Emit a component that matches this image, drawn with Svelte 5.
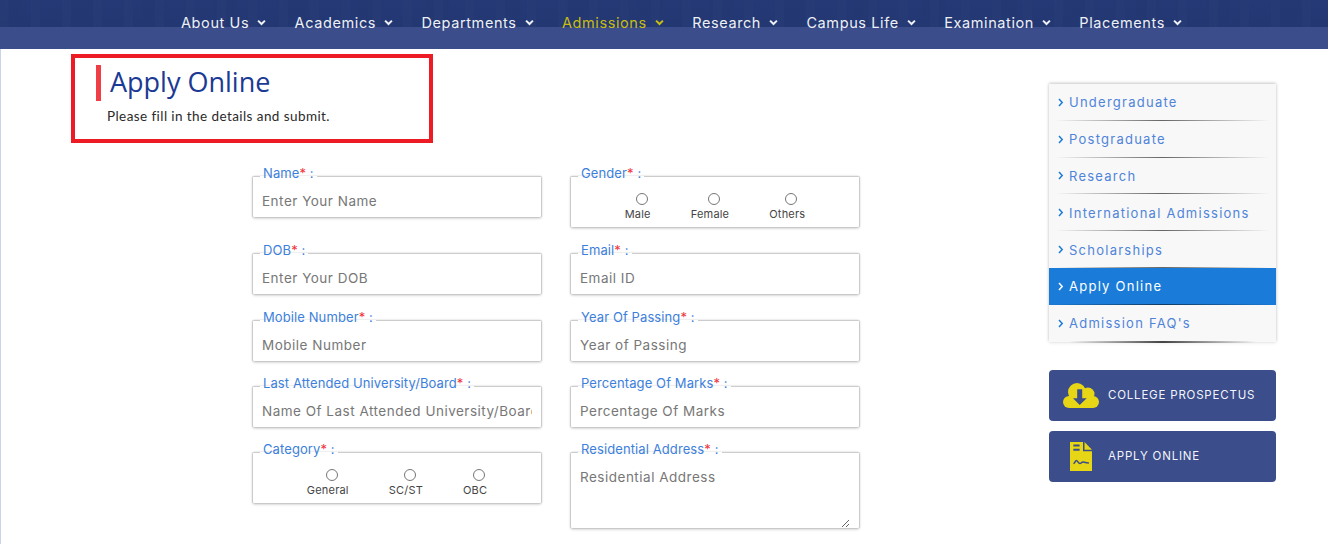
<script lang="ts">
  const navItems = [
    { name: 'About Us' },
    { name: 'Academics' },
    { name: 'Departments' },
    { name: 'Admissions', active: true },
    { name: 'Research' },
    { name: 'Campus Life' },
    { name: 'Examination' },
    { name: 'Placements' },
  ]

  const sideLinks = [
    { name: 'Undergraduate' },
    { name: 'Postgraduate' },
    { name: 'Research' },
    { name: 'International Admissions' },
    { name: 'Scholarships' },
    { name: 'Apply Online', active: true },
    { name: "Admission FAQ's" },
  ]

  const leftFields = [
    { label: 'Name', placeholder: 'Enter Your Name' },
    { label: 'DOB', placeholder: 'Enter Your DOB' },
    { label: 'Mobile Number', placeholder: 'Mobile Number' },
    { label: 'Last Attended University/Board', placeholder: 'Name Of Last Attended University/Board' },
    { label: 'Category', radios: ['General', 'SC/ST', 'OBC'] },
  ]

  const rightFields = [
    { label: 'Gender', radios: ['Male', 'Female', 'Others'] },
    { label: 'Email', placeholder: 'Email ID' },
    { label: 'Year Of Passing', placeholder: 'Year of Passing' },
    { label: 'Percentage Of Marks', placeholder: 'Percentage Of Marks' },
    { label: 'Residential Address', placeholder: 'Residential Address', area: true },
  ]

  // grid order goes row by row
  const fields = leftFields.flatMap((f, i) => [f, rightFields[i]])
</script>

<header class="topbar">
  <nav class="nav">
    {#each navItems as item}
      <a href="#top" class="nav-link" class:active={item.active}>
        {item.name}
        <svg class="caret" viewBox="0 0 10 7" width="9" height="7" aria-hidden="true">
          <path d="M1.200 1.400 5 5.200l3.800-3.800" fill="none" stroke="currentColor" stroke-width="2.200" />
        </svg>
      </a>
    {/each}
  </nav>
</header>

<main class="page">
  <section class="content">
    <div class="heading-box">
      <h1>Apply Online</h1>
      <p>Please fill in the details and submit.</p>
    </div>

    <form class="form-grid">
      {#each fields as field}
        <fieldset class="field">
          <legend>{field.label}<span class="req">*</span> :</legend>
          {#if field.radios}
            <div class="radios">
              {#each field.radios as option}
                <label class="radio">
                  <input type="radio" name={field.label} />
                  <span>{option}</span>
                </label>
              {/each}
            </div>
          {:else if field.area}
            <textarea placeholder={field.placeholder}></textarea>
          {:else}
            <input type="text" placeholder={field.placeholder} />
          {/if}
        </fieldset>
      {/each}
    </form>
  </section>

  <aside class="side">
    <ul class="side-menu">
      {#each sideLinks as link}
        <li class:active={link.active}>
          <svg class="chev" viewBox="0 0 6 9" width="6" height="9" aria-hidden="true">
            <path d="M1 1l3.200 3.500L1 8" fill="none" stroke="currentColor" stroke-width="1.500" />
          </svg>
          <a href="#top">{link.name}</a>
        </li>
      {/each}
    </ul>

    <a href="#top" class="side-btn">
      <span class="btn-icon">
        <svg viewBox="0 0 36 25" width="36" height="25" aria-hidden="true">
          <g fill="#e6d615">
            <circle cx="14" cy="9" r="9" />
            <circle cx="25" cy="11" r="6.500" />
            <circle cx="6" cy="19" r="6" />
            <circle cx="30" cy="19" r="6" />
            <rect x="6" y="13" width="24" height="12" />
          </g>
          <path fill="#3b4d8a" d="M14.200 6.300h5v9h4.500L16.700 22 10 15.300h4.200z" />
        </svg>
      </span>
      College Prospectus
    </a>
    <a href="#top" class="side-btn">
      <span class="btn-icon">
        <svg viewBox="0 0 22 29" width="22" height="29" aria-hidden="true">
          <path fill="#e6d615" d="M0 0h13v9.200h9V29H0z" />
          <path fill="#e6d615" d="M14.500 0 22 7.700h-7.500z" />
          <path fill="none" stroke="#3b4d8a" stroke-width="2" d="M3.400 3.400h6.200M3.400 7.700h6.200" />
          <path fill="none" stroke="#3b4d8a" stroke-width="1.600" d="M3.400 21.500c1.500 0 1.800-3 3-3s2 3 3.500 3 1.500-1.500 3-1.500 2 1 6 1" />
        </svg>
      </span>
      Apply Online
    </a>
  </aside>
</main>

<style>
  :global(body) {
    margin: 0;
    background: #fff;
    font-family: Inter, "Liberation Sans", sans-serif;
    overflow: hidden;
  }
  * {
    box-sizing: border-box;
  }
  a {
    text-decoration: none;
  }

  .topbar {
    height: 49px;
    background:
      repeating-linear-gradient(90deg, rgba(255, 255, 255, 0.012) 0 9px, transparent 9px 31px) 0 0 / 100% 27px no-repeat,
      repeating-linear-gradient(90deg, rgba(0, 0, 0, 0.012) 0 23px, transparent 23px 71px) 0 0 / 100% 27px no-repeat,
      linear-gradient(#243975, #233873) 0 0 / 100% 27px no-repeat,
      #3b4d8a;
  }
  .nav {
    display: flex;
    justify-content: center;
    gap: 28.400px;
    padding: 13px 0 0 35px;
  }
  .nav-link {
    display: flex;
    align-items: center;
    gap: 8px;
    height: 19px;
    font-size: 14.500px;
    letter-spacing: 0.6px;
    color: #eef0f6;
    white-space: nowrap;
  }
  .nav-link.active {
    color: #c9bd12;
  }

  .page {
    display: flex;
    min-height: 495px;
    padding-left: 70px;
    border-left: 1px solid #c8d4e8;
  }
  .content {
    width: 978px;
  }

  .heading-box {
    width: 362px;
    height: 89px;
    margin-top: 5px;
    border: 4px solid #ed1c24;
    padding: 7px 0 0 21px;
  }
  h1 {
    margin: 0;
    height: 36px;
    border-left: 5px solid #ef3e45;
    padding-left: 9px;
    font-family: "Open Sans", sans-serif;
    font-size: 27px;
    font-weight: 400;
    line-height: 34px;
    color: #1b3a94;
  }
  .heading-box p {
    margin: 7px 0 0 11px;
    font-family: Lato, sans-serif;
    font-size: 13.500px;
    line-height: 17px;
    letter-spacing: 0.42px;
    color: #2a2a2a;
  }

  .form-grid {
    display: grid;
    grid-template-columns: 288px 288px;
    grid-template-rows: 77px 67px 66px 66px auto;
    column-gap: 30px;
    align-items: start;
    margin: 22px 0 0 182px;
  }
  .field {
    margin: 0;
    padding: 0 9px;
    min-width: 0;
    border: 0;
    border-top: 1px solid #ccc;
    box-shadow:
      0 1px 3px rgba(0, 0, 0, 0.3),
      -1px 0 1px -0.5px rgba(0, 0, 0, 0.12),
      1px 0 1px -0.5px rgba(0, 0, 0, 0.12);
    border-radius: 1px;
  }
  /* bottom padding lifts the label above the border line */
  legend {
    margin-left: -2px;
    padding: 0 3px 6px;
    font-size: 13px;
    line-height: 16px;
    letter-spacing: 0.1px;
    color: #3d7fdc;
    white-space: nowrap;
  }
  .req {
    color: #f0323c;
  }
  input[type='text'],
  textarea {
    display: block;
    width: 100%;
    border: 0;
    outline: 0;
    padding: 0;
    font-family: inherit;
    font-size: 13.500px;
    letter-spacing: 0.5px;
    color: #555;
    background: transparent;
  }
  input[type='text'] {
    height: 32px;
    margin-top: -2px;
  }
  textarea {
    height: 60px;
    margin-top: 5px;
    padding-top: 1px;
    line-height: 17px;
    resize: vertical;
  }
  ::placeholder {
    color: #777;
    opacity: 1;
  }
  .radios {
    display: flex;
    justify-content: center;
    gap: 40px;
    padding-top: 6px;
    height: 40px;
  }
  .radio {
    display: flex;
    flex-direction: column;
    align-items: center;
    font-size: 11px;
    line-height: 14px;
    letter-spacing: 0.2px;
    color: #444;
  }
  .radio input {
    width: 12px;
    height: 12px;
    margin: 0 0 2px 8px;
    accent-color: #777;
  }

  .side {
    width: 227px;
    margin-top: 35px;
  }
  .side-menu {
    list-style: none;
    margin: 0 0 28.400px;
    padding: 0;
    background: #f8f8f8;
    box-shadow: 0 -1px 3px rgba(0, 0, 0, 0.2), 0 1px 4px rgba(0, 0, 0, 0.08);
  }
  .side-menu li {
    position: relative;
    display: flex;
    align-items: center;
    height: 36.800px;
    padding-left: 9px;
    color: #1a7cd8;
    font-size: 13px;
  }
  .side-menu li::after {
    content: '';
    position: absolute;
    left: 6px;
    right: 6px;
    bottom: 0;
    height: 1px;
    background: linear-gradient(90deg, transparent, #666 50%, transparent);
  }
  .side-menu li:last-child::after {
    left: 20px;
    right: 20px;
    bottom: -1px;
    height: 2px;
    background: linear-gradient(90deg, transparent, #444 50%, transparent);
  }
  .side-menu a {
    margin-left: 5px;
    letter-spacing: 1.250px;
    color: #4f84d8;
  }
  .side-menu li.active {
    background: #1a7cd8;
    color: #fff;
  }
  .side-menu li.active::after {
    left: 0;
    right: 0;
    background: linear-gradient(90deg, #1a7cd8, #123a60 50%, #1a7cd8);
  }
  .side-menu li.active a {
    color: #fff;
  }
  .side-btn {
    display: flex;
    align-items: center;
    height: 51px;
    margin-bottom: 10px;
    padding-left: 14px;
    border-radius: 4px;
    background: #3b4d8a;
    font-size: 11.500px;
    letter-spacing: 0.8px;
    text-transform: uppercase;
    color: #f2f4fa;
  }
  .btn-icon {
    display: flex;
    justify-content: center;
    width: 36px;
    margin-right: 9px;
  }
</style>
